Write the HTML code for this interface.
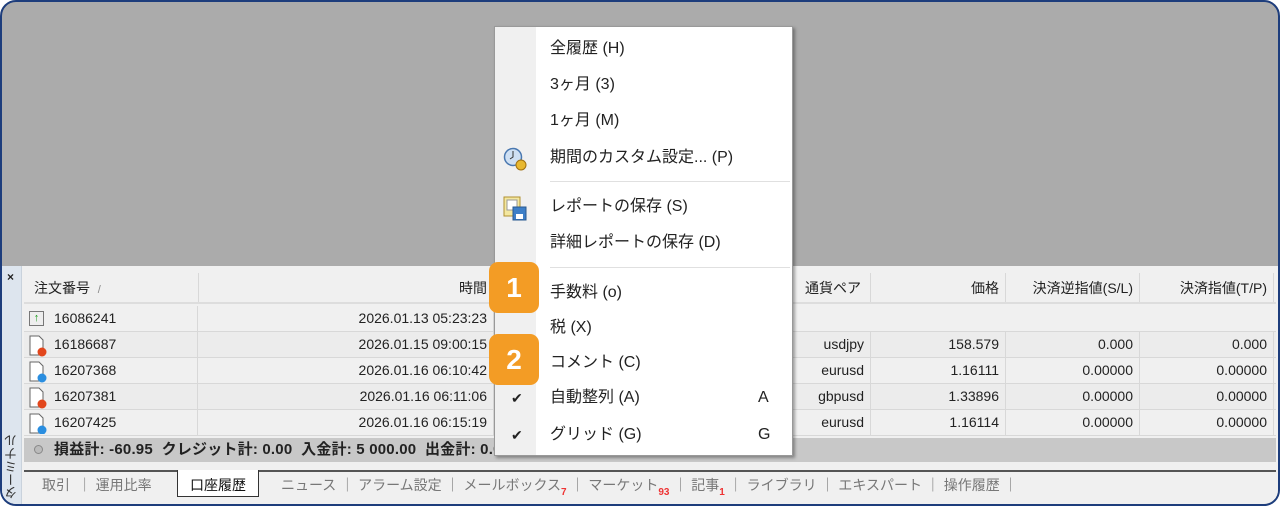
<!DOCTYPE html>
<html><head><meta charset="utf-8"><style>
*{margin:0;padding:0;box-sizing:border-box}
body{width:1280px;height:506px;background:#fff;font-family:"Liberation Sans","Noto Sans CJK JP",sans-serif;font-size:14px;color:#222;position:relative;overflow:hidden}
.frame{position:absolute;left:0;top:0;width:1280px;height:506px;border:2px solid #1d3d7c;border-radius:16px;overflow:hidden;background:#ababab}
.panel{position:absolute;left:0;top:264px;width:1280px;height:242px;background:#f0f0f0}
.side{position:absolute;left:0;top:0;width:20px;height:242px;background:#dde5ee;border-right:1px solid #c9d2dc}
.x{position:absolute;left:5px;top:4px;font-size:12px;font-weight:bold}
.vt{position:absolute;left:2px;top:168px;writing-mode:vertical-rl;transform:rotate(180deg);font-size:13px;color:#333;line-height:15px}
.tbl{position:absolute;left:22px;top:7px;width:1252px;background:#fff}
.row{position:absolute;left:0;width:1252px;height:26px;border-bottom:1px solid #d8d8d8}
.c{position:absolute;top:0;height:100%;line-height:25px;white-space:nowrap;border-right:1px solid #d8d8d8}
.r{text-align:right;padding-right:6px}
.g{background:#ececec}
.sum{position:absolute;left:22px;top:172px;width:1252px;height:24px;background:#c8c8c8;font-weight:bold;line-height:24px;padding-left:30px;font-size:15px;letter-spacing:0.2px}
.tabs{position:absolute;left:22px;top:204px;width:1252px;height:29px;border-top:2px solid #555;background:#f0f0f0;color:#777;font-size:14px;line-height:26px}
.tabs span{position:absolute;top:0;white-space:nowrap}
.act{background:#fff;border:1px solid #333;border-top:none;color:#111;height:27px;top:-2px!important;padding:2px 12px 0}
.sub{position:static!important;color:#e33;font-size:10px;font-weight:bold;vertical-align:-5px}
.menu{position:absolute;left:494px;top:26px;width:299px;height:430px;background:#fff;border:1px solid #999;box-shadow:2px 2px 3px rgba(0,0,0,.35)}
.gut{position:absolute;left:0;top:0;width:41px;height:100%;background:#f0f0f0}
.mi{position:absolute;left:55px;font-size:16px;color:#222;white-space:nowrap;line-height:20px}
.sep{position:absolute;left:55px;width:240px;height:1px;background:#e0e0e0}
.chk{position:absolute;left:16px;font-size:14px;line-height:20px}
.acc{position:absolute;left:263px;font-size:16px;line-height:20px}
.badge{position:absolute;left:489px;width:50px;height:51px;background:#f39c25;border-radius:9px;color:#fff;font-weight:bold;font-size:28px;text-align:center;line-height:51px}
</style></head><body>
<div class="frame">
<div class="panel">
 <div class="side"><div class="x">×</div><div class="vt">ターミナル</div></div>
 <div class="tbl">
  <div class="row" style="top:0;height:31px;border-bottom:2px solid #ddd">
   <div class="c" style="left:0;width:175px;line-height:30px;padding-left:10px">注文番号 &nbsp;<span style="color:#888;font-size:11px">/</span></div>
   <div class="c r" style="left:175px;width:295px;line-height:30px">時間</div>
   <div class="c" style="left:773px;width:74px;line-height:30px;padding-left:8px">通貨ペア</div>
   <div class="c r" style="left:847px;width:135px;line-height:30px">価格</div>
   <div class="c r" style="left:982px;width:134px;line-height:30px">決済逆指値(S/L)</div>
   <div class="c r" style="left:1116px;width:134px;line-height:30px">決済指値(T/P)</div>
  </div>
 </div>
 <div class="tbl" style="top:40px">
  <div class="row" style="top:0"><div class="c" style="left:0;width:174px;padding-left:30px">16086241</div><div class="c r" style="left:174px;width:296px">2026.01.13 05:23:23</div>
   <div style="position:absolute;left:5px;top:5px;width:15px;height:15px;border:1px solid #777;background:#eee;color:#1a9a1a;font-size:11px;line-height:13px;text-align:center;font-weight:bold">↑</div></div>
  <div class="row g" style="top:26px"><div class="c" style="left:0;width:174px;padding-left:30px">16186687</div><div class="c r" style="left:174px;width:296px">2026.01.15 09:00:15</div>
   <div class="c r" style="left:773px;width:74px">usdjpy</div><div class="c r" style="left:847px;width:135px">158.579</div><div class="c r" style="left:982px;width:134px">0.000</div><div class="c r" style="left:1116px;width:134px">0.000</div></div>
  <div class="row" style="top:52px"><div class="c" style="left:0;width:174px;padding-left:30px">16207368</div><div class="c r" style="left:174px;width:296px">2026.01.16 06:10:42</div>
   <div class="c r" style="left:773px;width:74px">eurusd</div><div class="c r" style="left:847px;width:135px">1.16111</div><div class="c r" style="left:982px;width:134px">0.00000</div><div class="c r" style="left:1116px;width:134px">0.00000</div></div>
  <div class="row g" style="top:78px"><div class="c" style="left:0;width:174px;padding-left:30px">16207381</div><div class="c r" style="left:174px;width:296px">2026.01.16 06:11:06</div>
   <div class="c r" style="left:773px;width:74px">gbpusd</div><div class="c r" style="left:847px;width:135px">1.33896</div><div class="c r" style="left:982px;width:134px">0.00000</div><div class="c r" style="left:1116px;width:134px">0.00000</div></div>
  <div class="row" style="top:104px"><div class="c" style="left:0;width:174px;padding-left:30px">16207425</div><div class="c r" style="left:174px;width:296px">2026.01.16 06:15:19</div>
   <div class="c r" style="left:773px;width:74px">eurusd</div><div class="c r" style="left:847px;width:135px">1.16114</div><div class="c r" style="left:982px;width:134px">0.00000</div><div class="c r" style="left:1116px;width:134px">0.00000</div></div>
  <svg style="position:absolute;left:4px;top:28px" width="20" height="100">
   <g fill="#fff" stroke="#666"><path d="M2 2h9l4 4v15H2z"/><path d="M2 28h9l4 4v15H2z"/><path d="M2 54h9l4 4v15H2z"/><path d="M2 80h9l4 4v15H2z"/></g>
   <circle cx="14" cy="18" r="4.5" fill="#e2461c"/><circle cx="14" cy="44" r="4.5" fill="#2a8ee0"/><circle cx="14" cy="70" r="4.5" fill="#e2461c"/><circle cx="14" cy="96" r="4.5" fill="#2a8ee0"/>
  </svg>
 </div>
 <div class="sum"><span style="position:absolute;left:10px;top:7px;width:9px;height:9px;border-radius:50%;border:1px solid #888;background:#bbb"></span>損益計: -60.95 &nbsp;クレジット計: 0.00 &nbsp;入金計: 5 000.00 &nbsp;出金計: 0.00</div>
 <div class="tabs">
  <span style="left:18px">取引 &nbsp;｜ 運用比率</span>
  <span class="act" style="left:153px">口座履歴</span>
  <span style="left:257px">ニュース ｜ アラーム設定 ｜ メールボックス<span class="sub">7</span> ｜ マーケット<span class="sub">93</span> ｜ 記事<span class="sub">1</span> ｜ ライブラリ ｜ エキスパート ｜ 操作履歴 ｜</span>
 </div>
</div>
</div>
<div class="menu">
 <div class="gut"></div>
 <div class="mi" style="top:12px">全履歴 (H)</div>
 <div class="mi" style="top:48px">3ヶ月 (3)</div>
 <div class="mi" style="top:84px">1ヶ月 (M)</div>
 <svg style="position:absolute;left:8px;top:119px" width="26" height="26"><circle cx="10" cy="11" r="8.5" fill="#cfe0f3" stroke="#4a78b0" stroke-width="1.5"/><path d="M10 5v6l-3 2" stroke="#333" fill="none"/><circle cx="18" cy="19" r="5" fill="#e8b830" stroke="#a07010"/></svg>
 <div class="mi" style="top:121px">期間のカスタム設定... (P)</div>
 <div class="sep" style="top:154px"></div>
 <svg style="position:absolute;left:7px;top:168px" width="28" height="28"><rect x="2" y="2" width="16" height="19" fill="#f3e7a0" stroke="#b09030"/><rect x="5" y="5" width="10" height="10" fill="#fff" stroke="#999"/><rect x="11" y="12" width="13" height="13" fill="#3d7fc8" stroke="#2a5a90"/><rect x="14" y="19" width="7" height="5" fill="#fff"/></svg>
 <div class="mi" style="top:170px">レポートの保存 (S)</div>
 <div class="mi" style="top:206px">詳細レポートの保存 (D)</div>
 <div class="sep" style="top:240px"></div>
 <div class="mi" style="top:256px">手数料 (o)</div>
 <div class="mi" style="top:291px">税 (X)</div>
 <div class="mi" style="top:326px">コメント (C)</div>
 <div class="chk" style="top:361px">✔</div><div class="mi" style="top:361px">自動整列 (A)</div><div class="acc" style="top:361px">A</div>
 <div class="chk" style="top:398px">✔</div><div class="mi" style="top:398px">グリッド (G)</div><div class="acc" style="top:398px">G</div>
</div>
<div class="badge" style="top:262px">1</div>
<div class="badge" style="top:334px">2</div>
</body></html>
